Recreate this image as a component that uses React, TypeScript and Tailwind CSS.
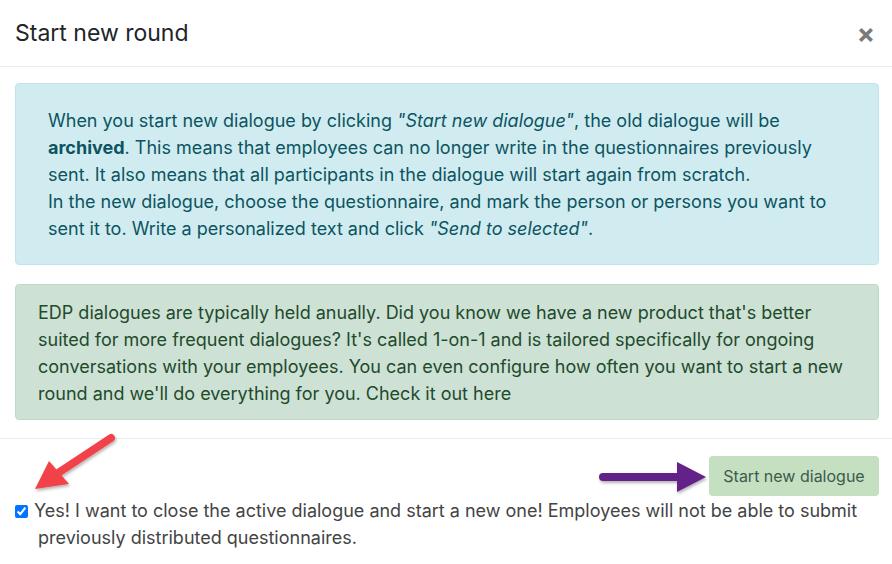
export default function App() {
    return (
        <div className="relative w-[892px] h-[564px] overflow-hidden bg-white font-['Inter','Noto_Sans',sans-serif]">
            <div className="h-[67px] px-[15px] flex items-center justify-between border-b border-[#e9ecef]">
                <h1 className="text-[23px] text-[#212529]">Start new round</h1>
                <span className="mr-[2px] text-[27px] font-bold leading-none text-[#7a7a7a]">×</span>
            </div>

            <div className="pl-[15px] pr-[13px] pt-[16px] pb-[18px] flex flex-col gap-[19px]">
                <div className="h-[182px] rounded-[4px] border border-[#bee5eb] bg-[#d1ecf1] pl-[32px] pr-[20px] pt-[23px] text-[18px] leading-[27px] text-[#0c5460]">
                    <p>
                        When you start new dialogue by clicking <em>"Start new dialogue"</em>, the old dialogue will be{" "}
                        <strong>archived</strong>. This means that employees can no longer write in the questionnaires previously
                        sent. It also means that all participants in the dialogue will start again from scratch.
                    </p>
                    <p>
                        In the new dialogue, choose the questionnaire, and mark the person or persons you want to sent it to.
                        Write a personalized text and click <em>"Send to selected"</em>.
                    </p>
                </div>
                <div className="h-[136px] rounded-[4px] border border-[#bfd9c7] bg-[#cde1d5] pl-[22px] pr-[20px] pt-[14px] text-[18px] leading-[27px] text-[#1f4a2c]">
                    <p>
                        EDP dialogues are typically held anually. Did you know we have a new product that's better suited for
                        more frequent dialogues? It's called 1-on-1 and is tailored specifically for ongoing conversations with
                        your employees. You can even configure how often you want to start a new round and we'll do everything
                        for you. Check it out here
                    </p>
                </div>
            </div>

            <div className="border-t border-[#e9ecef] pl-[15px] pr-[13px] pt-[17px]">
                <div className="flex justify-end">
                    <button className="h-[40px] w-[170px] rounded-[4px] bg-[#c5e0c1] text-[16px] text-[#3c5a4d]">
                        Start new dialogue
                    </button>
                </div>
                <label className="block pl-[23px] pt-[1px] text-[18px] leading-[27px] text-[#444]">
                    <input type="checkbox" defaultChecked className="-ml-[23px] mr-[6px] h-[13px] w-[13px] align-[-1px] accent-[#0075ff]" />
                    Yes! I want to close the active dialogue and start a new one! Employees will not be able to submit
                    previously distributed questionnaires.
                </label>
            </div>

            <svg className="absolute left-0 top-0 pointer-events-none" width="892" height="564">
                <defs>
                    <filter id="sh" x="-20%" y="-20%" width="140%" height="140%">
                        <feDropShadow dx="1" dy="2" stdDeviation="1.5" floodColor="#000" floodOpacity="0.3" />
                    </filter>
                </defs>
                <g filter="url(#sh)">
                    <line x1="111" y1="438" x2="55" y2="475" stroke="#f2434a" strokeWidth="8" strokeLinecap="round" />
                    <polygon points="35,489 49,461 69,484" fill="#f2434a" />
                </g>
                <g filter="url(#sh)">
                    <line x1="603" y1="477" x2="680" y2="477" stroke="#642087" strokeWidth="8" strokeLinecap="round" />
                    <polygon points="677,462 706,477 677,492" fill="#642087" />
                </g>
            </svg>
        </div>
    );
}
